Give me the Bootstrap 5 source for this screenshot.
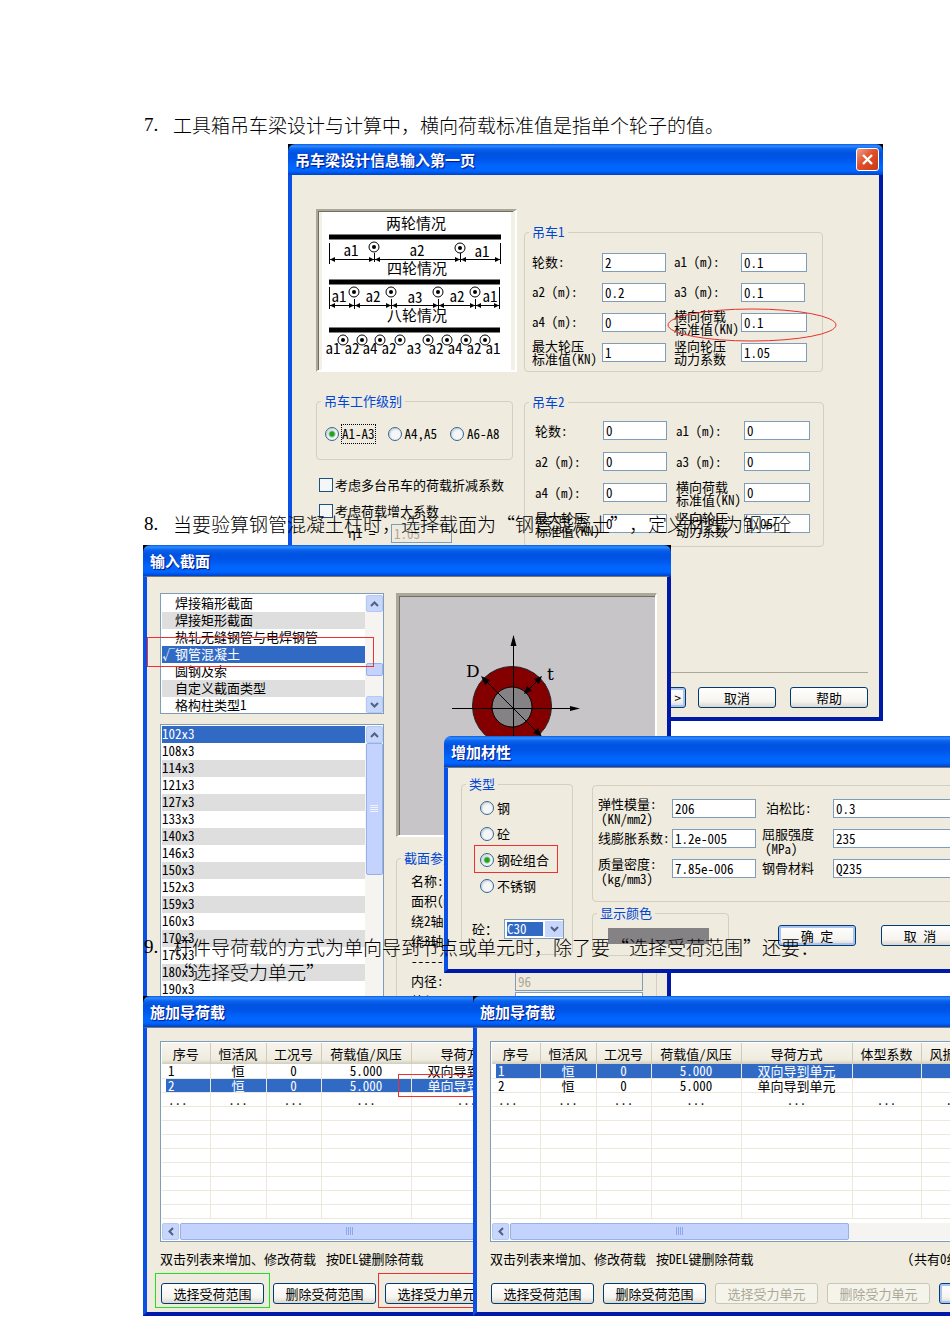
<!DOCTYPE html>
<html lang="zh-CN">
<head>
<meta charset="utf-8">
<meta name="viewport" content="width=device-width, initial-scale=1">
<title>结构软件使用说明</title>
<link href="https://cdn.jsdelivr.net/npm/bootstrap@5.3.0/dist/css/bootstrap.min.css" rel="stylesheet">
<style>
  :root { --face:#efebde; --line:#d3d0bf; --edit:#7f9db9; --sel:#316ac5; --ink:#0046d5; }
  body { background:#fff; color:#000; font-family:"Noto Sans CJK SC",sans-serif; }
  .sheet { padding-top:112px; }
  .item-7 { min-height:399px; }
  .item-8 { min-height:423px; }
  .item-9 { min-height:408px; }
  .note { position:relative; z-index:10; margin:0; padding-left:144px; font-size:19px; line-height:25px; font-weight:300; display:flex; color:#000; text-spacing-trim:space-all; }
  .note .num { width:29px; font-family:"Liberation Serif",serif; }

  /* dialog windows */
  .win { position:absolute; display:flex; flex-direction:column; background:#000; font-size:13px; line-height:18px; font-feature-settings:"hwid"; }
  .win-title { height:31px; flex:none; padding:0 7px; border-radius:7px 7px 0 0; color:#fff; font-size:15px; font-weight:700; text-shadow:1px 1px 1px #00138c;
    background:linear-gradient(#0a5ae0 0,#2f8dff 2px,#0a62ee 5px,#0053e0 9px,#0054e6 14px,#0066ff 22px,#0066ff 27px,#0040c8 31px); }
  .win-body { flex:1; background:var(--face); border:solid; border-width:0 4px 4px; border-color:#0a3fdc #0019a8 #0019a8 #0a4fe6; min-height:0; }
  .win-body.sunk { border-top:1px solid #7d7a6c; }
  .w-crane { left:288px; top:32px; width:595px; height:577px; z-index:1; }
  .w-section { left:143px; top:34px; width:528px; height:470px; z-index:2; }
  .w-material { left:444px; top:225px; width:560px; height:237px; z-index:3; background:none; }
  .w-load { top:62px; height:320px; width:560px; z-index:4; left:143px; }
  .w-load.second { left:473px; z-index:5; }
  .close-btn { width:23px; height:23px; padding:0; border:1px solid #fff; border-radius:3px; background:linear-gradient(135deg,#f0a088,#e0502c 45%,#c83a12); }
  .close-btn svg { display:block; margin:auto; }

  fieldset.box { border:1px solid var(--line); border-radius:4px; padding:0; min-width:0; }
  .box legend { float:none; width:auto; margin:0 0 0 4px; padding:0 3px; font-size:13px; line-height:18px; color:var(--ink); }
  .edit { display:block; height:19px; border:1px solid var(--edit); border-radius:0; background:#fff; color:#000; padding:0 2px; font-size:13px; line-height:17px; font-feature-settings:"hwid"; min-width:0; }
  .edit:disabled { background:var(--face); color:#aca899; }
  .xp-btn { height:21px; padding:0; border:1px solid #003c74; border-radius:3px; background:linear-gradient(#fff,#f6f4ef 70%,#dcd6cc); color:#000; font-size:13px; line-height:18px; font-feature-settings:"hwid"; flex:none; }
  .xp-btn.main { box-shadow:inset 0 0 0 2px #a9c3f3; }
  .xp-btn:disabled { border-color:#c9c7ba; background:#f5f4ea; color:#aca899; opacity:1; }
  .tight { line-height:13px; }
  .w78 { width:78px; } .w103 { width:103px; }

  .opt { display:flex; align-items:center; margin:0; }
  .opt .form-check-input { margin:0 3px 0 0; width:14px; height:14px; flex:none; border:1px solid #1c5180; background-color:#f4f6f8; box-shadow:none; }
  .opt .form-check-input[type=radio] { border-color:#35668f; box-shadow:inset 1px 1px 2px #c4ccd4; }
  .opt .form-check-input[type=radio]:checked { background:radial-gradient(circle,#21a121 0,#21a121 2px,#f4f6f8 4px); }
  .opt .form-check-input[type=checkbox] { border-radius:0; margin-right:2px; }
  .opt.tick-row { padding-left:3px; }
  .focus-dots { outline:1px dotted #000; }

  /* crane dialog */
  .crane-cols { display:grid; grid-template-columns:201px 300px; column-gap:7px; padding:34px 0 0 24px; }
  .well { border:solid; border-width:3px 2px 2px 3px; border-color:#aca899 #fff #fff #aca899; box-shadow:inset 1px 1px 0 #716f64; }
  .crane-grid { display:grid; align-items:center; }
  .crane-grid .edit { width:64px; }
  .g1 { height:149px; margin-top:14px; width:299px; } .g1 .crane-grid { grid-template-columns:70px 72px 67px 66px; grid-auto-rows:30px; padding:6px 0 0 7px; }
  .g2 { height:154px; margin-top:21px; } .g2 .crane-grid { grid-template-columns:68px 73px 68px 66px; grid-auto-rows:31px; padding:4px 0 0 10px; }
  .grade { height:68px; width:197px; margin-top:20px; }
  .grade .opts { display:flex; gap:13px; padding:15px 0 0 8px; }
  .over { position:absolute; pointer-events:none; }
  .crane-foot { margin:0 11px 9px 24px; border-top:1px solid #aca899; padding-top:14px; display:flex; justify-content:flex-end; gap:14px; }
  .crane-foot .next { margin-right:-2px; }

  /* list boxes */
  .lbox { display:flex; border:1px solid var(--edit); background:#fff; padding:1px 0 0 1px; overflow:hidden; }
  .lbox ul { flex:1; margin:0; padding:0; list-style:none; line-height:16px; }
  .lbox li { height:17px; white-space:nowrap; }
  .lbox li:nth-child(even) { background:#dedede; }
  .stripe-odd li:nth-child(odd) { background:#dedede; } .stripe-odd li:nth-child(even) { background:#fff; }
  .lbox li.on { background:var(--sel); color:#fff; }
  .l1 { height:121px; } .l1 li { padding-left:13px; } .l1 li.on { padding-left:0; }
  .l1 .tick { display:inline-block; width:13px; }
  .l2 { height:300px; margin-top:10px; }
  .sbar { width:18px; display:flex; flex-direction:column; align-items:center; background:#f6f4f1; }
  .sb { width:17px; height:17px; flex:none; padding:0; border:1px solid #b4c8f6; border-radius:2px; background:#c8d6fb; display:flex; align-items:center; justify-content:center; }
  .thumb { background:#c3d3fd; border:1px solid #98b0e8; border-radius:2px; }
  .thumb-low { width:17px; height:13px; margin:auto 0 20px; }
  .thumb-long { width:17px; height:132px; display:flex; align-items:center; justify-content:center; }
  .sec-cols { display:grid; grid-template-columns:224px 261px; column-gap:12px; padding:16px 0 0 13px; height:100%; overflow:hidden; }
  .preview { height:244px; background:#c8c5c9; }
  .params { margin-top:12px; height:190px; }
  .params .rows { display:grid; grid-template-columns:104px 128px; padding:4px 0 0 14px; grid-auto-rows:20px; align-items:center; white-space:nowrap; }

  /* material dialog */
  .mat-cols { display:grid; grid-template-columns:112px 1fr; column-gap:19px; padding:7px 0 0 13px; }
  .kind { height:180px; } .kind .opts { padding:2px 0 0 18px; display:grid; grid-auto-rows:26px; align-items:center; }
  .kind .combo { margin:20px 0 0 10px; display:flex; align-items:center; }
  .combo label { width:32px; white-space:nowrap; }
  .combo select { width:60px; height:20px; border:1px solid var(--edit); border-radius:0; appearance:none; padding:0 0 0 2px; color:#fff; font-size:13px; line-height:16px; font-feature-settings:"hwid";
    background:linear-gradient(#c8d6fb,#c8d6fb) 100% 50%/18px 16px no-repeat, linear-gradient(var(--sel),var(--sel)) 2px 50%/36px 14px no-repeat, #fff; }
  .combo .chev { position:absolute; right:5px; top:7px; }
  fieldset.props { height:117px; margin-top:10px; display:grid; grid-template-columns:74px 90px 71px 170px; grid-auto-rows:30px; align-items:center; padding:7px 0 0 5px; }
  .props .two { align-self:start; padding-top:3px; line-height:15px; white-space:nowrap; }
  .props .two span { padding-left:3px; }
  .props .edit.s { width:84px; }
  .tone { width:137px; height:52px; } .tone div { width:101px; height:16px; background:#858285; margin:6px 0 0 15px; }
  .mat-foot { display:flex; padding-top:2px; }
  .mat-foot .btns { display:flex; gap:25px; padding:21px 0 0 49px; }

  /* load dialog */
  .load-pad { padding:13px 0 0 13px; }
  .tbox { width:620px; height:201px; border:1px solid var(--edit); background:#fff; padding:1px 0 0 1px; }
  .loads { table-layout:fixed; width:600px; border-collapse:collapse; font-size:13px; line-height:14px; text-align:center; margin:0; }
  .loads th { height:21px; font-weight:400; background:linear-gradient(#f6f4ee,#efebde 80%,#d0ccbe); border-right:1px solid #d0ccbb; padding:0; white-space:nowrap; }
  .loads td { height:14px; padding:0; border:1px solid #ece9dc; border-width:0 1px 1px 0; white-space:nowrap; line-height:13px; }
  .loads td:first-child { text-align:left; padding-left:6px; }
  .loads tr.on td { background:var(--sel); color:#fff; }
  .loads tr.on td:first-child { background:linear-gradient(90deg,#fff 4px,var(--sel) 4px); }
  .hbar { display:flex; height:17px; margin-top:4px; background:#f6f4f1; }
  .hbar .thumb { width:339px; display:flex; align-items:center; justify-content:center; margin-left:1px; }
  .hint { display:flex; padding-top:8px; gap:10px; white-space:nowrap; }
  .hint .total { margin-left:144px; }
  .acts { display:flex; gap:9px; padding:15px 0 0 1px; }
  .frame-red { border:1px solid #f03030; } .frame-green { border:1px solid #20e020; }
</style>
</head>
<body>
<main class="sheet position-relative overflow-hidden w-100">

<section class="item-7 position-relative">
  <p class="note"><span class="num">7.</span><span>工具箱吊车梁设计与计算中，横向荷载标准值是指单个轮子的值。</span></p>
  <div class="win w-crane">
    <header class="win-title d-flex align-items-center justify-content-between pe-1"><span>吊车梁设计信息输入第一页</span>
      <button type="button" class="close-btn" aria-label="关闭"><svg width="15" height="15" viewBox="0 0 15 15"><path d="M3 3l9 9M12 3l-9 9" stroke="#fff" stroke-width="2.4"/></svg></button></header>
    <div class="win-body d-flex flex-column">
      <div class="crane-cols">
        <div>
          <svg class="d-block" width="201" height="163" viewBox="316 209 201 163" font-size="15" text-anchor="middle" font-family="Noto Sans CJK SC,sans-serif">
            <defs><g id="wheel"><circle r="5" fill="#fff" stroke="#000"/><circle r="2"/></g>
            <marker id="ar" viewBox="0 0 6 6" refX="6" refY="3" markerWidth="5" markerHeight="5" orient="auto-start-reverse"><path d="M0 0l6 3-6 3z"/></marker></defs>
            <rect x="316" y="209" width="201" height="163" fill="#fff"/><path d="M316 372V209h201l-2 2H318v159z" fill="#aca899"/><path d="M318 370V211h196l-1 1H319v158z" fill="#716f64"/>
            <rect x="319" y="212" width="3" height="158" fill="#f3f0e6"/><rect x="511" y="212" width="4" height="158" fill="#f3f0e6"/>
            <text x="416" y="229">两轮情况</text><text x="417" y="274">四轮情况</text><text x="417" y="321">八轮情况</text>
            <path d="M329 237H501M329 282H500M329 330H500" stroke="#000" stroke-width="5"/>
            <path d="M329.500 243v21M500.500 243v21M329.500 287v22M499.500 287v22M374.500 253v9M460.500 253v9M354.500 299v10M391.500 299v10M438.500 299v10M475.500 299v10" stroke="#000"/>
            <g stroke="#000" fill="none">
              <path d="M330 259.500H374" marker-start="url(#ar)" marker-end="url(#ar)"/><path d="M375 259.500H460" marker-start="url(#ar)" marker-end="url(#ar)"/><path d="M461 259.500H500" marker-start="url(#ar)" marker-end="url(#ar)"/>
              <path d="M330 305.500H354" marker-start="url(#ar)" marker-end="url(#ar)"/><path d="M355 305.500H391" marker-start="url(#ar)" marker-end="url(#ar)"/><path d="M392 305.500H438" marker-start="url(#ar)" marker-end="url(#ar)"/><path d="M439 305.500H475" marker-start="url(#ar)" marker-end="url(#ar)"/><path d="M476 305.500H499" marker-start="url(#ar)" marker-end="url(#ar)"/></g>
            <text x="351" y="256">a1</text><text x="417" y="256">a2</text><text x="482" y="257">a1</text>
            <text x="339" y="302">a1</text><text x="373" y="302">a2</text><text x="415" y="303">a3</text><text x="457" y="302">a2</text><text x="490" y="302">a1</text>
            <text x="333" y="354">a1</text><text x="352" y="354">a2</text><text x="370" y="354">a4</text><text x="389" y="354">a2</text><text x="414" y="354">a3</text><text x="436" y="354">a2</text><text x="455" y="354">a4</text><text x="474" y="354">a2</text><text x="493" y="354">a1</text>
            <use href="#wheel" x="374" y="247"/><use href="#wheel" x="460" y="248"/>
            <use href="#wheel" x="354" y="292"/><use href="#wheel" x="391" y="292"/><use href="#wheel" x="438" y="292"/><use href="#wheel" x="475" y="292"/>
            <use href="#wheel" x="343" y="340"/><use href="#wheel" x="362" y="340"/><use href="#wheel" x="380" y="340"/><use href="#wheel" x="400" y="340"/><use href="#wheel" x="428" y="340"/><use href="#wheel" x="447" y="340"/><use href="#wheel" x="466" y="340"/><use href="#wheel" x="485" y="340"/>
          </svg>
          <fieldset class="box grade"><legend>吊车工作级别</legend>
            <div class="opts">
              <label class="opt"><input class="form-check-input" type="radio" name="grade" checked><span class="focus-dots">A1-A3</span></label>
              <label class="opt"><input class="form-check-input" type="radio" name="grade">A4,A5</label>
              <label class="opt"><input class="form-check-input" type="radio" name="grade">A6-A8</label>
            </div></fieldset>
          <label class="opt tick-row pt-3"><input class="form-check-input" type="checkbox">考虑多台吊车的荷载折减系数</label>
          <label class="opt tick-row pt-2"><input class="form-check-input" type="checkbox">考虑荷载增大系数</label>
          <div class="d-flex pt-1 ps-4"><label for="eta" class="ps-2" style="width:51px">η1 =</label><input id="eta" class="edit" style="width:61px" value="1.05" disabled></div>
        </div>
        <div>
          <fieldset class="box g1"><legend>吊车1</legend><div class="crane-grid">
            <label for="a0">轮数:</label><input id="a0" class="edit" value="2"><label for="a1">a1 (m):</label><input id="a1" class="edit w-100" value="0.1">
            <label for="a2">a2 (m):</label><input id="a2" class="edit" value="0.2"><label for="a3">a3 (m):</label><input id="a3" class="edit" value="0.1">
            <label for="a4">a4 (m):</label><input id="a4" class="edit" value="0"><label for="a5" class="tight">横向荷载<br>标准值(KN)</label><input id="a5" class="edit w-100" value="0.1">
            <label for="a6" class="tight">最大轮压<br>标准值(KN)</label><input id="a6" class="edit" value="1"><label for="a7" class="tight">竖向轮压<br>动力系数</label><input id="a7" class="edit w-100" value="1.05">
          </div></fieldset>
          <fieldset class="box g2"><legend>吊车2</legend><div class="crane-grid">
            <label for="b0">轮数:</label><input id="b0" class="edit" value="0"><label for="b1">a1 (m):</label><input id="b1" class="edit w-100" value="0">
            <label for="b2">a2 (m):</label><input id="b2" class="edit" value="0"><label for="b3">a3 (m):</label><input id="b3" class="edit w-100" value="0">
            <label for="b4">a4 (m):</label><input id="b4" class="edit" value="0"><label for="b5" class="tight">横向荷载<br>标准值(KN)</label><input id="b5" class="edit w-100" value="0">
            <label for="b6" class="tight">最大轮压<br>标准值(KN)</label><input id="b6" class="edit" value="0"><label for="b7" class="tight">竖向轮压<br>动力系数</label><input id="b7" class="edit w-100" value="1.05">
          </div></fieldset>
        </div>
      </div>
      <div class="crane-foot mt-auto"><button type="button" class="btn xp-btn main w78 next text-end pe-1">&gt;</button><button type="button" class="btn xp-btn w78">取消</button><button type="button" class="btn xp-btn w78">帮助</button></div>
    </div>
    <svg class="over" style="left:379px;top:163px" width="170" height="36"><ellipse cx="85" cy="18" rx="84" ry="16" fill="none" stroke="#e83030"/></svg>
  </div>
</section>

<section class="item-8 position-relative">
  <p class="note"><span class="num">8.</span><span>当要验算钢管混凝土柱时，选择截面为“钢管混凝土”，定义材性为钢+砼</span></p>
  <div class="win w-section">
    <header class="win-title d-flex align-items-center">输入截面</header>
    <div class="win-body sunk">
      <div class="sec-cols">
        <div>
          <div class="lbox l1"><ul><li>焊接箱形截面</li><li>焊接矩形截面</li><li>热轧无缝钢管与电焊钢管</li><li class="on"><span class="tick">√</span>钢管混凝土</li><li>圆钢及索</li><li>自定义截面类型</li><li>格构柱类型1</li></ul>
            <div class="sbar"><button type="button" class="sb" aria-label="上"><svg width="9" height="6"><path d="M1 5l3.500-3.500L8 5" fill="none" stroke="#4d6185" stroke-width="2"/></svg></button><div class="thumb thumb-low"></div><button type="button" class="sb" aria-label="下"><svg width="9" height="6"><path d="M1 1l3.500 3.500L8 1" fill="none" stroke="#4d6185" stroke-width="2"/></svg></button></div></div>
          <div class="lbox l2 stripe-odd"><ul><li class="on">102x3</li><li>108x3</li><li>114x3</li><li>121x3</li><li>127x3</li><li>133x3</li><li>140x3</li><li>146x3</li><li>150x3</li><li>152x3</li><li>159x3</li><li>160x3</li><li>170x3</li><li>175x3</li><li>180x3</li><li>190x3</li></ul>
            <div class="sbar"><button type="button" class="sb" aria-label="上"><svg width="9" height="6"><path d="M1 5l3.500-3.500L8 5" fill="none" stroke="#4d6185" stroke-width="2"/></svg></button><div class="thumb thumb-long"><svg width="8" height="8"><path d="M0 .5h8M0 2.500h8M0 4.500h8M0 6.500h8" stroke="#eef3ff"/></svg></div></div></div>
        </div>
        <div>
          <div class="well preview"><svg class="d-block" width="256" height="239" viewBox="399 596 256 239" font-family="DejaVu Serif,serif" font-size="17">
            <circle cx="512" cy="706" r="39.500" fill="#840000" stroke="#222"/><circle cx="512" cy="707" r="20" fill="#848284" stroke="#000"/>
            <path d="M452 708.500H577M513.500 636V760M483 678l57 57M526 692l14-14" stroke="#000" fill="none"/>
            <path d="M513.500 635l3 11h-6zM580 708.500l-10-2.500v5zM481 676l9 4-5 5zM542 737l-9-4 5-5zM542 676l-8 3 5 5zM524 694l3-8 5 5z"/>
            <text x="466" y="677">D</text><text x="547" y="680">t</text></svg></div>
          <fieldset class="box params"><legend>截面参数</legend><div class="rows">
            <span>名称:</span><span></span><span>面积(mm2):</span><span></span><span>绕2轴惯性矩:</span><span></span><span>绕3轴惯性矩:</span><span></span><span>----------------</span><span></span>
            <label for="d1">内径:</label><input id="d1" class="edit" value="96" disabled><label for="d2">外径:</label><input id="d2" class="edit" value="102">
          </div></fieldset>
        </div>
      </div>
    </div>
    <div class="over frame-red" style="left:4px;top:92px;width:227px;height:30px"></div>
  </div>

  <div class="win w-material">
    <header class="win-title d-flex align-items-center">增加材性</header>
    <div class="win-body sunk"><div class="mat-cols">
      <fieldset class="box kind"><legend>类型</legend>
        <div class="opts">
          <label class="opt"><input class="form-check-input" type="radio" name="kind">钢</label>
          <label class="opt"><input class="form-check-input" type="radio" name="kind">砼</label>
          <label class="opt"><input class="form-check-input" type="radio" name="kind" checked>钢砼组合</label>
          <label class="opt"><input class="form-check-input" type="radio" name="kind">不锈钢</label>
        </div>
        <div class="combo"><label for="grade2">砼：</label><div class="position-relative"><select id="grade2"><option>C30</option></select><svg class="chev" width="9" height="6"><path d="M1 1l3.500 3.500L8 1" fill="none" stroke="#4d6185" stroke-width="2"/></svg></div></div>
      </fieldset>
      <div>
        <fieldset class="box props">
          <label for="m1" class="two">弹性模量:<br><span>(KN/mm2)</span></label><input id="m1" class="edit s" value="206"><label for="m2" class="ps-1">泊松比:</label><input id="m2" class="edit" value="0.3">
          <label for="m3" class="text-nowrap">线膨胀系数:</label><input id="m3" class="edit s" value="1.2e-005"><label for="m4" class="two">屈服强度<br><span>(MPa)</span></label><input id="m4" class="edit" value="235">
          <label for="m5" class="two">质量密度:<br><span>(kg/mm3)</span></label><input id="m5" class="edit s" value="7.85e-006"><label for="m6">钢骨材料</label><input id="m6" class="edit" value="Q235">
        </fieldset>
        <div class="mat-foot"><fieldset class="box tone"><legend>显示颜色</legend><div></div></fieldset>
          <div class="btns"><button type="button" class="btn xp-btn main w78">确　定</button><button type="button" class="btn xp-btn w78">取　消</button></div></div>
      </div>
    </div></div>
    <div class="over frame-red" style="left:30px;top:109px;width:84px;height:28px"></div>
  </div>
</section>

<section class="item-9 position-relative">
  <p class="note"><span class="num">9.</span><span>杆件导荷载的方式为单向导到节点或单元时，除了要“选择受荷范围”还要：<br>“选择受力单元”</span></p>

  <div class="win w-load">
    <header class="win-title d-flex align-items-center">施加导荷载</header>
    <div class="win-body sunk"><div class="load-pad overflow-hidden">
      <div class="tbox"><table class="loads">
        <colgroup><col style="width:48px"><col style="width:56px"><col style="width:55px"><col style="width:90px"><col style="width:111px"><col style="width:69px"><col></colgroup>
        <thead><tr><th>序号</th><th>恒活风</th><th>工况号</th><th>荷载值/风压</th><th>导荷方式</th><th></th><th></th></tr></thead>
        <tbody><tr><td>1</td><td>恒</td><td>0</td><td>5.000</td><td>双向导到单元</td><td></td><td></td></tr>
        <tr class="on"><td>2</td><td>恒</td><td>0</td><td>5.000</td><td>单向导到单元</td><td></td><td></td></tr>
        <tr><td>...</td><td>...</td><td>...</td><td>...</td><td>...</td><td></td><td></td></tr>
        <tr><td></td><td></td><td></td><td></td><td></td><td></td><td></td></tr><tr><td></td><td></td><td></td><td></td><td></td><td></td><td></td></tr><tr><td></td><td></td><td></td><td></td><td></td><td></td><td></td></tr><tr><td></td><td></td><td></td><td></td><td></td><td></td><td></td></tr><tr><td></td><td></td><td></td><td></td><td></td><td></td><td></td></tr><tr><td></td><td></td><td></td><td></td><td></td><td></td><td></td></tr><tr><td></td><td></td><td></td><td></td><td></td><td></td><td></td></tr><tr><td></td><td></td><td></td><td></td><td></td><td></td><td></td></tr></tbody></table>
        <div class="hbar"><button type="button" class="sb" aria-label="左"><svg width="6" height="9"><path d="M5 1L1.500 4.500 5 8" fill="none" stroke="#4d6185" stroke-width="2"/></svg></button><div class="thumb"><svg width="8" height="8"><path d="M.5 0v8M2.500 0v8M4.500 0v8M6.500 0v8" stroke="#8ca8e8"/></svg></div></div></div>
      <div class="hint"><span>双击列表来增加、修改荷载</span><span>按DEL键删除荷载</span></div>
      <div class="acts"><button type="button" class="btn xp-btn w103">选择受荷范围</button><button type="button" class="btn xp-btn w103">删除受荷范围</button><button type="button" class="btn xp-btn w103">选择受力单元</button></div>
    </div></div>
    <div class="over frame-red" style="left:255px;top:78px;width:130px;height:23px"></div>
    <div class="over frame-green" style="left:12px;top:277px;width:115px;height:35px"></div>
    <div class="over frame-red" style="left:235px;top:277px;width:115px;height:35px"></div>
  </div>

  <div class="win w-load second">
    <header class="win-title d-flex align-items-center">施加导荷载</header>
    <div class="win-body sunk"><div class="load-pad overflow-hidden">
      <div class="tbox"><table class="loads">
        <colgroup><col style="width:48px"><col style="width:56px"><col style="width:55px"><col style="width:90px"><col style="width:111px"><col style="width:69px"><col></colgroup>
        <thead><tr><th>序号</th><th>恒活风</th><th>工况号</th><th>荷载值/风压</th><th>导荷方式</th><th>体型系数</th><th class="text-start ps-2">风振系数</th></tr></thead>
        <tbody><tr class="on"><td>1</td><td>恒</td><td>0</td><td>5.000</td><td>双向导到单元</td><td></td><td></td></tr>
        <tr><td>2</td><td>恒</td><td>0</td><td>5.000</td><td>单向导到单元</td><td></td><td></td></tr>
        <tr><td>...</td><td>...</td><td>...</td><td>...</td><td>...</td><td>...</td><td class="text-start ps-4">...</td></tr>
        <tr><td></td><td></td><td></td><td></td><td></td><td></td><td></td></tr><tr><td></td><td></td><td></td><td></td><td></td><td></td><td></td></tr><tr><td></td><td></td><td></td><td></td><td></td><td></td><td></td></tr><tr><td></td><td></td><td></td><td></td><td></td><td></td><td></td></tr><tr><td></td><td></td><td></td><td></td><td></td><td></td><td></td></tr><tr><td></td><td></td><td></td><td></td><td></td><td></td><td></td></tr><tr><td></td><td></td><td></td><td></td><td></td><td></td><td></td></tr><tr><td></td><td></td><td></td><td></td><td></td><td></td><td></td></tr></tbody></table>
        <div class="hbar"><button type="button" class="sb" aria-label="左"><svg width="6" height="9"><path d="M5 1L1.500 4.500 5 8" fill="none" stroke="#4d6185" stroke-width="2"/></svg></button><div class="thumb"><svg width="8" height="8"><path d="M.5 0v8M2.500 0v8M4.500 0v8M6.500 0v8" stroke="#8ca8e8"/></svg></div></div></div>
      <div class="hint"><span>双击列表来增加、修改荷载</span><span>按DEL键删除荷载</span><span class="total">(共有0组)</span></div>
      <div class="acts"><button type="button" class="btn xp-btn w103">选择受荷范围</button><button type="button" class="btn xp-btn w103">删除受荷范围</button><button type="button" class="btn xp-btn w103" disabled>选择受力单元</button><button type="button" class="btn xp-btn w103" disabled>删除受力单元</button><button type="button" class="btn xp-btn main w103">确定</button></div>
    </div></div>
  </div>
</section>
</main>
<script src="https://cdn.jsdelivr.net/npm/bootstrap@5.3.0/dist/js/bootstrap.bundle.min.js"></script>
</body>
</html>
